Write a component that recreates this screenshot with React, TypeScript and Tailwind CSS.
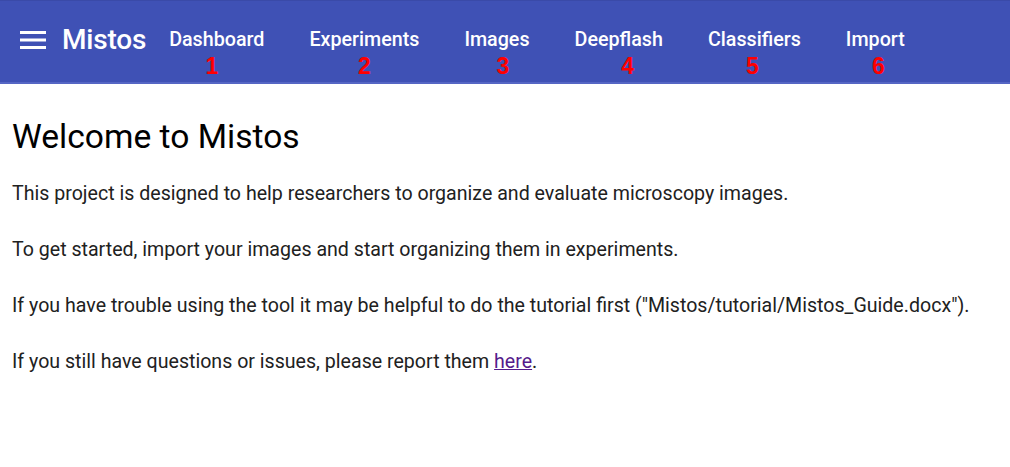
const navItems = [
  { label: "Dashboard", num: "1", numClass: "-translate-x-[5px]" },
  { label: "Experiments", num: "2", numClass: "translate-x-0" },
  { label: "Images", num: "3", numClass: "translate-x-[6px]" },
  { label: "Deepflash", num: "4", numClass: "translate-x-[9px]" },
  { label: "Classifiers", num: "5", numClass: "-translate-x-[2px]" },
  { label: "Import", num: "6", numClass: "translate-x-[3px]" },
];

function MenuIcon() {
  return (
    <svg width="26" height="18" viewBox="0 0 26 18" className="shrink-0">
      <rect x="0" y="0" width="26" height="3" fill="white" />
      <rect x="0" y="7.5" width="26" height="3" fill="white" />
      <rect x="0" y="15" width="26" height="3" fill="white" />
    </svg>
  );
}

export default function App() {
  return (
    <div className="min-h-[467px] bg-white font-['Roboto',sans-serif] text-[#212121]">
      <header className="flex h-[84px] items-start border-b-2 border-[#5566c4] bg-[#3f51b5] pl-5 shadow-[0_1px_0_#3a4aa8_inset]">
        <div className="flex h-[80px] items-center gap-4">
          <MenuIcon />
          <span className="text-[28px] font-medium tracking-[-0.2px] text-white">Mistos</span>
        </div>
        <nav className="ml-[23px] flex gap-[45px] pt-[27px]">
          {navItems.map((item) => (
            <div key={item.label} className="flex flex-col items-center">
              <span className="text-[19.7px] leading-[26px] font-medium text-white">{item.label}</span>
              <span
                className={`font-['Liberation_Sans',sans-serif] text-[23px] leading-[26px] font-bold text-[#ff0000] ${item.numClass}`}
              >
                {item.num}
              </span>
            </div>
          ))}
        </nav>
      </header>

      <main className="px-3 pt-[33px]">
        <h1 className="text-[33.6px] leading-[40px] font-normal text-black">Welcome to Mistos</h1>
        <div className="mt-[24px] space-y-[30px] text-[19.6px] leading-[26px] text-[#212121]">
          <p>This project is designed to help researchers to organize and evaluate microscopy images.</p>
          <p>To get started, import your images and start organizing them in experiments.</p>
          <p>
            If you have trouble using the tool it may be helpful to do the tutorial first
            ("Mistos/tutorial/Mistos_Guide.docx").
          </p>
          <p>
            If you still have questions or issues, please report them{" "}
            <a href="#" className="text-[#551a8b] underline">
              here
            </a>
            .
          </p>
        </div>
      </main>
    </div>
  );
}
